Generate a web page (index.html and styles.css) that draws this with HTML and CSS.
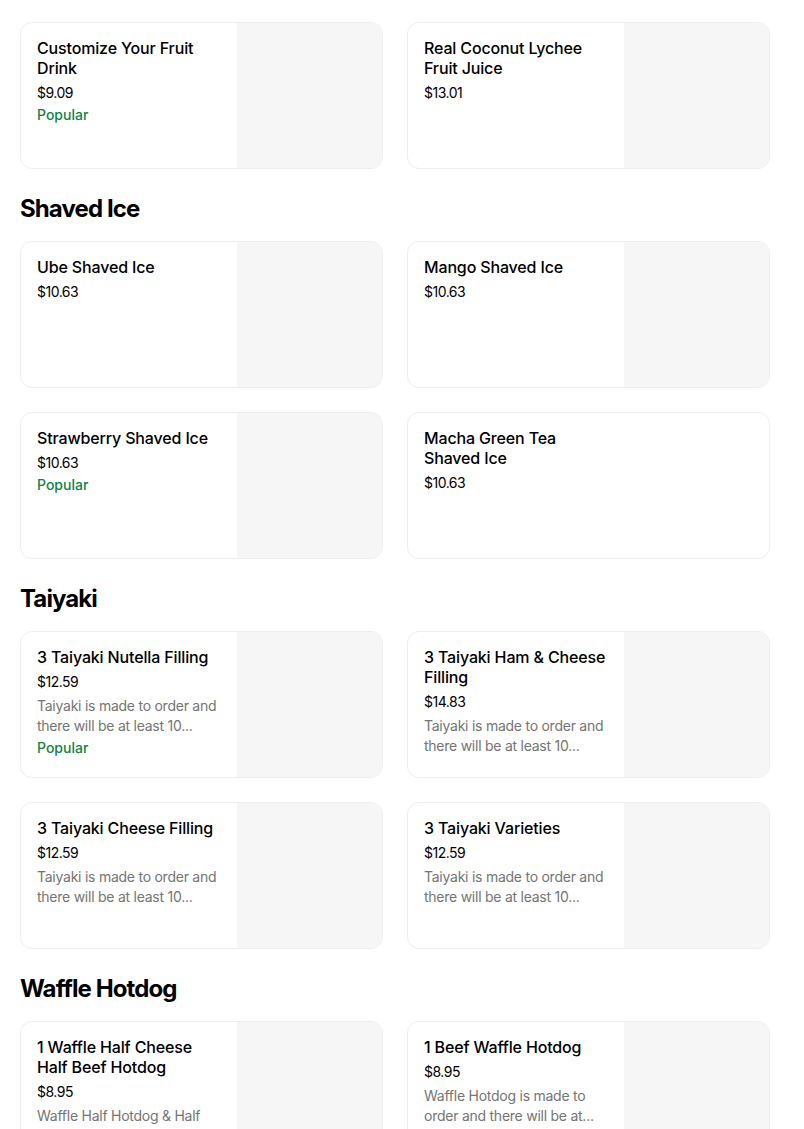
FILE: index.html
```html
<!DOCTYPE html>
<html lang="en">
<head>
<meta charset="utf-8">
<title>Menu</title>
<link rel="stylesheet" href="styles.css">
</head>
<body>
<main class="menu">
  <section class="section">
    <h2 class="section-title">Fruit Juice</h2>
    <div class="grid">
      <div class="card">
        <div class="card-body">
          <div class="title">Customize Your Fruit Drink</div>
          <div class="price">$9.09</div>
          <div class="popular">Popular</div>
        </div>
        <div class="thumb"></div>
      </div>
      <div class="card">
        <div class="card-body">
          <div class="title">Real Coconut Lychee Fruit Juice</div>
          <div class="price">$13.01</div>
        </div>
        <div class="thumb"></div>
      </div>
    </div>
  </section>

  <section class="section">
    <h2 class="section-title">Shaved Ice</h2>
    <div class="grid">
      <div class="card">
        <div class="card-body">
          <div class="title">Ube Shaved Ice</div>
          <div class="price">$10.63</div>
        </div>
        <div class="thumb"></div>
      </div>
      <div class="card">
        <div class="card-body">
          <div class="title">Mango Shaved Ice</div>
          <div class="price">$10.63</div>
        </div>
        <div class="thumb"></div>
      </div>
      <div class="card">
        <div class="card-body">
          <div class="title">Strawberry Shaved Ice</div>
          <div class="price">$10.63</div>
          <div class="popular">Popular</div>
        </div>
        <div class="thumb"></div>
      </div>
      <div class="card">
        <div class="card-body">
          <div class="title">Macha Green Tea Shaved Ice</div>
          <div class="price">$10.63</div>
        </div>
      </div>
    </div>
  </section>

  <section class="section">
    <h2 class="section-title">Taiyaki</h2>
    <div class="grid">
      <div class="card">
        <div class="card-body">
          <div class="title">3 Taiyaki Nutella Filling</div>
          <div class="price">$12.59</div>
          <div class="desc">Taiyaki is made to order and there will be at least 10...</div>
          <div class="popular">Popular</div>
        </div>
        <div class="thumb"></div>
      </div>
      <div class="card">
        <div class="card-body">
          <div class="title">3 Taiyaki Ham &amp; Cheese Filling</div>
          <div class="price">$14.83</div>
          <div class="desc">Taiyaki is made to order and there will be at least 10...</div>
        </div>
        <div class="thumb"></div>
      </div>
      <div class="card">
        <div class="card-body">
          <div class="title">3 Taiyaki Cheese Filling</div>
          <div class="price">$12.59</div>
          <div class="desc">Taiyaki is made to order and there will be at least 10...</div>
        </div>
        <div class="thumb"></div>
      </div>
      <div class="card">
        <div class="card-body">
          <div class="title">3 Taiyaki Varieties</div>
          <div class="price">$12.59</div>
          <div class="desc">Taiyaki is made to order and there will be at least 10...</div>
        </div>
        <div class="thumb"></div>
      </div>
    </div>
  </section>

  <section class="section">
    <h2 class="section-title">Waffle Hotdog</h2>
    <div class="grid">
      <div class="card">
        <div class="card-body">
          <div class="title">1 Waffle Half Cheese Half Beef Hotdog</div>
          <div class="price">$8.95</div>
          <div class="desc">Waffle Half Hotdog &amp; Half Cheese Hotdog...</div>
        </div>
        <div class="thumb"></div>
      </div>
      <div class="card">
        <div class="card-body">
          <div class="title">1 Beef Waffle Hotdog</div>
          <div class="price">$8.95</div>
          <div class="desc">Waffle Hotdog is made to order and there will be at...</div>
        </div>
        <div class="thumb"></div>
      </div>
    </div>
  </section>
</main>
</body>
</html>
```

FILE: styles.css
```css
* { box-sizing: border-box; }
html, body { margin: 0; padding: 0; background: #ffffff; }
body {
  font-family: "Inter", "Roboto", "Liberation Sans", sans-serif;
  color: #000000;
}
.menu {
  width: 770px;
  padding: 0 0 0 20px;
  margin-top: -26px;
}
.section + .section { margin-top: 24px; }
.section-title {
  margin: 0 0 16px;
  font-size: 24px;
  line-height: 32px;
  font-weight: 700;
  letter-spacing: -0.9px;
}
.grid {
  display: grid;
  grid-template-columns: 363px 363px;
  column-gap: 24px;
  row-gap: 24px;
}
.card {
  display: flex;
  height: 147px;
  border: 1px solid #eeeeee;
  border-radius: 12px;
  overflow: hidden;
  background: #ffffff;
}
.card-body {
  width: 216px;
  flex: 0 0 216px;
  padding: 15px 16px 16px;
}
.thumb {
  flex: 0 0 145px;
  height: 145px;
  background: #f6f6f6;
}
.title {
  font-size: 16px;
  line-height: 20px;
  font-weight: 500;
  letter-spacing: -0.15px;
}
.price {
  margin-top: 5px;
  font-size: 14px;
  line-height: 20px;
  letter-spacing: -0.5px;
}
.desc {
  margin-top: 4px;
  max-height: 40px;
  overflow: hidden;
  font-size: 14px;
  line-height: 20px;
  letter-spacing: -0.25px;
  color: #757575;
}
.popular {
  margin-top: 2px;
  font-size: 14px;
  line-height: 20px;
  font-weight: 500;
  color: #0e8345;
}
```
